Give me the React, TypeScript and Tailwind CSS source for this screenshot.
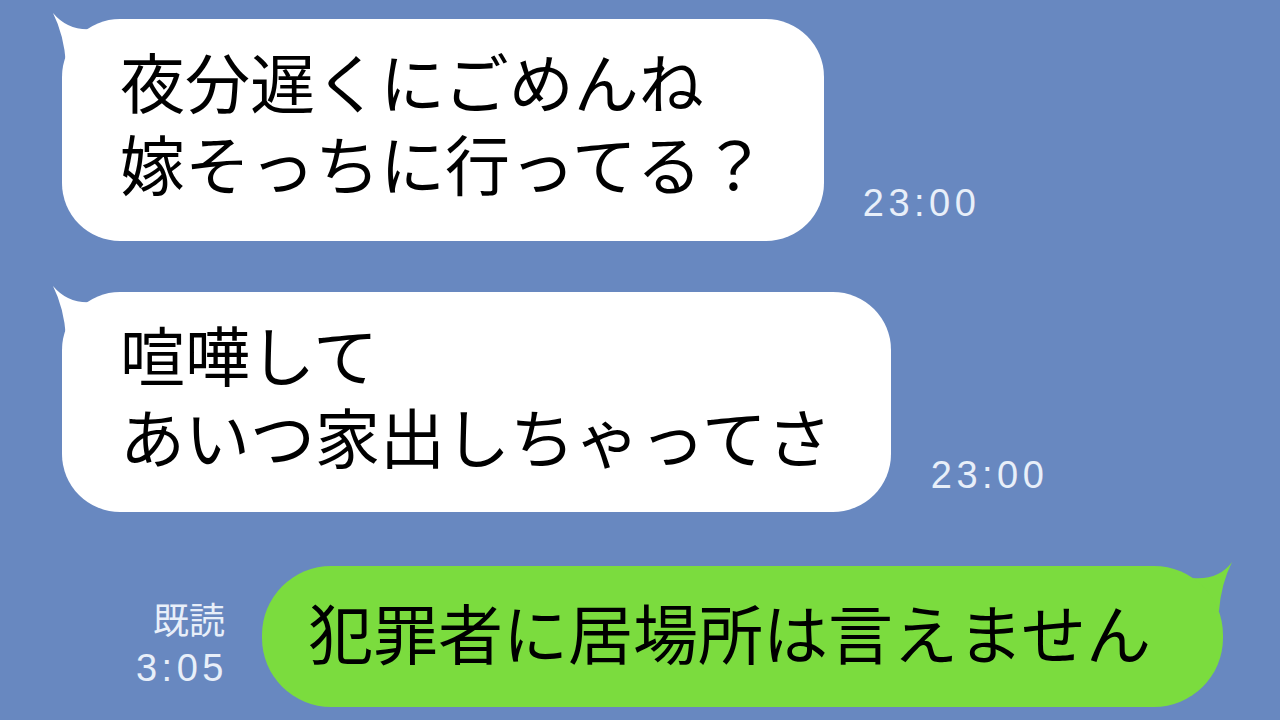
import React from "react"

const jp = "font-['Noto_Sans_CJK_JP','Noto_Sans',sans-serif]"
const num = "font-['Liberation_Sans',Arial,sans-serif]"

// horn-shaped tail on the top-left of an incoming bubble
function LeftTail() {
  return (
    <svg className="absolute left-[-12px] top-[-10px]" width="60" height="60" viewBox="0 0 60 60">
      <path d="M3 4 Q18 22 42 20 L42 55 L16 55 Q14 26 3 4 Z" fill="#ffffff" />
    </svg>
  )
}

function RightTail() {
  return (
    <svg className="absolute right-[-12px] top-[-10px]" width="60" height="60" viewBox="0 0 60 60">
      <path d="M57 6 Q44 24 18 22 L18 55 L44 55 Q46 28 57 6 Z" fill="#7bdc3e" />
    </svg>
  )
}

function Time({ t, className = "" }: { t: string; className?: string }) {
  return (
    <span className={`${num} text-[38px] leading-[38px] tracking-[4.5px] text-[#e8eff9] ${className}`}>{t}</span>
  )
}

export default function App() {
  return (
    <div className="w-[1280px] h-[720px] bg-[#6888c0] flex flex-col overflow-hidden">
      {/* incoming 1 */}
      <div className="flex items-end mt-[19px] ml-[62px]">
        <div className="relative">
          <LeftTail />
          <div className={`relative bg-white rounded-[58px] pl-[58px] pr-[57px] pt-[20px] pb-[38px] ${jp} text-[65px] leading-[82px] text-black whitespace-nowrap`}>
            <div>夜分遅くにごめんね</div>
            <div>嫁そっちに行ってる？</div>
          </div>
        </div>
        <Time t="23:00" className="ml-[39px] mb-[19px]" />
      </div>

      {/* incoming 2 */}
      <div className="flex items-end mt-[51px] ml-[62px]">
        <div className="relative">
          <LeftTail />
          <div className={`relative bg-white rounded-[58px] pl-[58px] pr-[59px] pt-[20px] pb-[36px] ${jp} text-[65px] leading-[82px] text-black whitespace-nowrap`}>
            <div>喧嘩して</div>
            <div>あいつ家出しちゃってさ</div>
          </div>
        </div>
        <Time t="23:00" className="ml-[40px] mb-[18px]" />
      </div>

      {/* outgoing */}
      <div className="flex items-end justify-end mt-[54px] mr-[57px]">
        <div className="flex flex-col items-end mr-[34px] mb-[20px]">
          <span className={`${jp} text-[36px] leading-[44px] mb-[9px] mr-[3px] text-[#e8eff9]`}>既読</span>
          <Time t="3:05" />
        </div>
        <div className="relative">
          <RightTail />
          <div className={`relative bg-[#7bdc3e] rounded-[69px] pl-[46px] pr-[72px] pt-[24px] pb-[35px] ${jp} text-[65px] leading-[82px] text-black whitespace-nowrap`}>
            犯罪者に居場所は言えません
          </div>
        </div>
      </div>
    </div>
  )
}
